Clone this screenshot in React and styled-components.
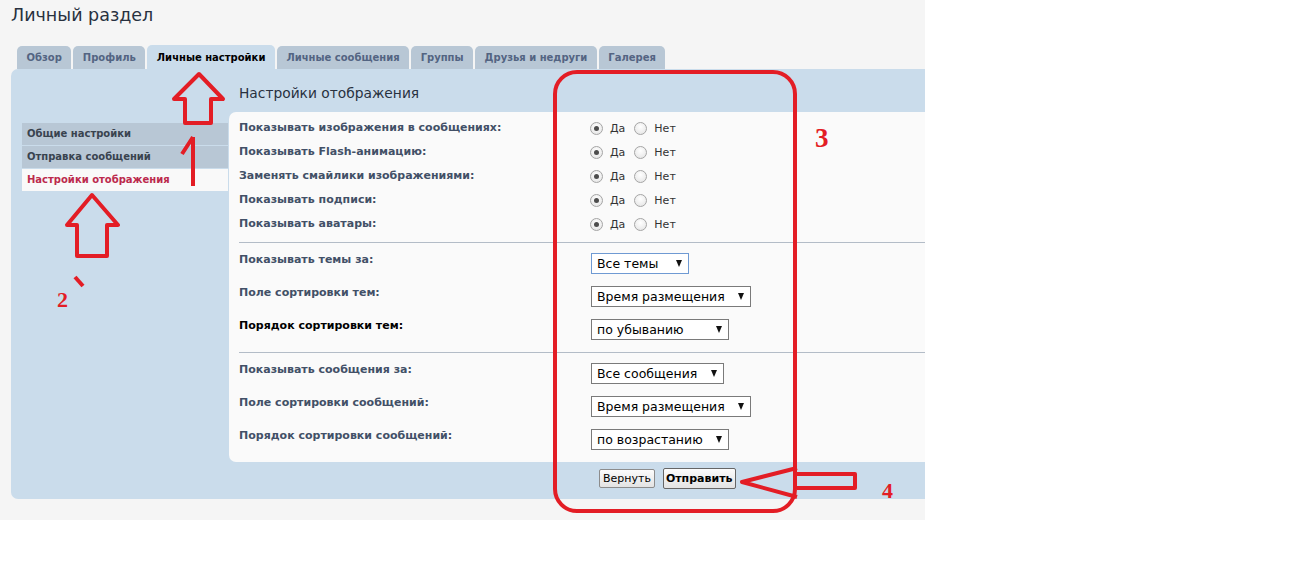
import React from "react"
import styled, { createGlobalStyle } from "styled-components"

const GlobalStyle = createGlobalStyle`
    html, body {
        margin: 0;
        padding: 0;
        background: #fff;
    }
    body {
        font-family: "DejaVu Sans", Verdana, sans-serif;
    }
`;

const Screen = styled.div`
    position: relative;
    width: 1299px;
    height: 567px;
    overflow: hidden;
`;

const Page = styled.div`
    width: 925px;
    height: 520px;
    box-sizing: border-box;
    padding-left: 11px;
    background: #f5f5f5;
    overflow: hidden;
`;

const Title = styled.h2`
    margin: 0;
    padding: 4px 0 19px;
    font-size: 17.5px;
    line-height: 22px;
    font-weight: normal;
    color: #28313f;
`;

const Tabs = styled.ul`
    display: flex;
    align-items: flex-end;
    height: 24px;
    margin: 0;
    padding: 0 0 0 6px;
    list-style: none;
`;

const Tab = styled.li`
    height: ${p => (p.$active ? "24px" : "23px")};
    box-sizing: border-box;
    padding: ${p => (p.$active ? "1px 9.5px 0" : "0 9.5px")};
    margin-right: 2px;
    border-radius: 5px 5px 0 0;
    background: ${p => (p.$active ? "#cadceb" : "#b8c7d5")};
    color: ${p => (p.$active ? "#000" : "#536482")};
    font-size: 10px;
    font-weight: bold;
    line-height: 23px;
    white-space: nowrap;
`;

const Panel = styled.div`
    display: flex;
    width: 960px;
    height: 430px;
    box-sizing: border-box;
    padding-left: 11px;
    border-radius: 7px;
    background: #cadceb;
`;

const Menu = styled.ul`
    width: 206px;
    flex-shrink: 0;
    margin: 54px 0 0;
    padding: 0;
    list-style: none;
`;

const MenuItem = styled.li`
    height: 22px;
    margin-bottom: 1px;
    padding-left: 5px;
    background: ${p => (p.$active ? "#f9f9f9" : "#b8c7d5")};
    color: ${p => (p.$active ? "#bc2a4d" : "#39434f")};
    font-size: 10px;
    font-weight: bold;
    line-height: 22px;
`;

const Main = styled.div`
    flex: 1;
    display: flex;
    flex-direction: column;
    margin-left: 1px;
`;

const Heading = styled.h3`
    margin: 0 0 9px;
    padding: 14px 0 0 10px;
    font-size: 13.8px;
    line-height: 20px;
    font-weight: normal;
    color: #28313f;
`;

const Content = styled.div`
    padding: 4px 0 0 10px;
    border-radius: 7px 0 0 7px;
    background: #fafafa;
`;

const RadioRow = styled.div`
    display: flex;
    align-items: center;
    height: 24px;
`;

const Label = styled.div`
    width: 351px;
    flex-shrink: 0;
    font-size: 11px;
    font-weight: bold;
    line-height: 14px;
    color: ${p => (p.$hover ? "#000" : "#425067")};
`;

const Option = styled.span`
    display: flex;
    align-items: center;
    gap: 7px;
    margin-right: 9px;
    font-size: 11px;
    color: #333;
`;

const Radio = styled.span`
    position: relative;
    width: 13px;
    height: 13px;
    box-sizing: border-box;
    border: 1px solid #a5a5a5;
    border-radius: 50%;
    background: radial-gradient(circle at 50% 35%, #fff 0%, #e2e2e2 100%);

    &::after {
        content: "";
        display: ${p => (p.$checked ? "block" : "none")};
        position: absolute;
        inset: 3px;
        border-radius: 50%;
        background: #4d4d4d;
    }
`;

const Divider = styled.hr`
    height: 1px;
    margin: ${p => (p.$flush ? "0" : "6px 0 0")};
    border: 0;
    background: #b3bcc7;
`;

const SelectGroup = styled.div`
    display: flex;
    flex-direction: column;
    gap: 12px;
    padding: 10px 0 12px;
`;

const SelectRow = styled.div`
    display: flex;
    align-items: flex-start;
`;

const Select = styled.div`
    display: flex;
    align-items: center;
    justify-content: space-between;
    width: ${p => p.$width}px;
    height: 21px;
    box-sizing: border-box;
    margin-left: 1px;
    padding: 0 6px 0 5px;
    border: 1px solid ${p => (p.$focused ? "#6f9ad3" : "#7a7a7a")};
    background: #fff;
    font-size: 12.5px;
    color: #000;
    white-space: nowrap;
`;

const Caret = styled.span`
    width: 0;
    height: 0;
    border-left: 3.5px solid transparent;
    border-right: 3.5px solid transparent;
    border-top: 7px solid #111;
`;

const Actions = styled.div`
    display: flex;
    align-items: center;
    gap: 8px;
    height: 33px;
    padding-left: 370px;
`;

const Button = styled.button`
    height: ${p => (p.$primary ? "21px" : "19px")};
    padding: 0 ${p => (p.$primary ? "2px" : "3px")};
    border: 1px solid ${p => (p.$primary ? "#666" : "#8c8c8c")};
    border-radius: 2px;
    background: linear-gradient(#fcfcfc, #e3e3e3);
    font-family: inherit;
    font-size: 11px;
    font-weight: ${p => (p.$primary ? "bold" : "normal")};
    color: #000;
`;

const Marks = styled.svg`
    position: absolute;
    top: 0;
    left: 0;
    pointer-events: none;

    path, rect, polygon {
        fill: none;
        stroke: #e31d25;
        stroke-width: 4;
        stroke-linejoin: round;
    }
    text {
        fill: #e31d25;
        font-family: "Liberation Serif", "Times New Roman", serif;
        font-weight: bold;
    }
`;

const tabs = [
    "Обзор",
    "Профиль",
    "Личные настройки",
    "Личные сообщения",
    "Группы",
    "Друзья и недруги",
    "Галерея",
];

const menu = ["Общие настройки", "Отправка сообщений", "Настройки отображения"];

const toggles = [
    "Показывать изображения в сообщениях:",
    "Показывать Flash-анимацию:",
    "Заменять смайлики изображениями:",
    "Показывать подписи:",
    "Показывать аватары:",
];

const topicSelects = [
    { label: "Показывать темы за:", value: "Все темы", width: 98, focused: true },
    { label: "Поле сортировки тем:", value: "Время размещения", width: 160 },
    { label: "Порядок сортировки тем:", value: "по убыванию", width: 138, hover: true },
];

const postSelects = [
    { label: "Показывать сообщения за:", value: "Все сообщения", width: 133 },
    { label: "Поле сортировки сообщений:", value: "Время размещения", width: 160 },
    { label: "Порядок сортировки сообщений:", value: "по возрастанию", width: 138 },
];

const SelectList = ({ items }) => (
    <SelectGroup>
        {items.map(item => (
            <SelectRow key={item.label}>
                <Label $hover={item.hover}>{item.label}</Label>
                <Select $width={item.width} $focused={item.focused}>
                    {item.value}
                    <Caret />
                </Select>
            </SelectRow>
        ))}
    </SelectGroup>
);

const App = () => (
    <Screen>
        <GlobalStyle />
        <Page>
            <Title>Личный раздел</Title>
            <Tabs>
                {tabs.map(name => (
                    <Tab key={name} $active={name === "Личные настройки"}>{name}</Tab>
                ))}
            </Tabs>
            <Panel>
                <Menu>
                    {menu.map(name => (
                        <MenuItem key={name} $active={name === "Настройки отображения"}>{name}</MenuItem>
                    ))}
                </Menu>
                <Main>
                    <Heading>Настройки отображения</Heading>
                    <Content>
                        {toggles.map(label => (
                            <RadioRow key={label}>
                                <Label>{label}</Label>
                                <Option><Radio $checked />Да</Option>
                                <Option><Radio />Нет</Option>
                            </RadioRow>
                        ))}
                        <Divider />
                        <SelectList items={topicSelects} />
                        <Divider $flush />
                        <SelectList items={postSelects} />
                    </Content>
                    <Actions>
                        <Button>Вернуть</Button>
                        <Button $primary>Отправить</Button>
                    </Actions>
                </Main>
            </Panel>
        </Page>

        <Marks width="1299" height="567">
            <polygon points="199,74 223,99 211,99 211,123 185,123 185,99 174,99" />
            <path d="M193 137 L193 186 M182 154 L193 137" />
            <polygon points="92,195 118,225 107,225 107,256 77,256 77,225 67,225" />
            <path d="M75 277 L83 286" strokeWidth="3" />
            <rect x="555" y="72" width="240" height="439" rx="22" />
            <path d="M797 468 L742 482 L797 497 M797 474 L855 474 L855 488 L797 488" />
            <text x="57" y="307" fontSize="22">2</text>
            <text x="815" y="147" fontSize="27">3</text>
            <text x="882" y="498" fontSize="22">4</text>
        </Marks>
    </Screen>
);

export default App;
